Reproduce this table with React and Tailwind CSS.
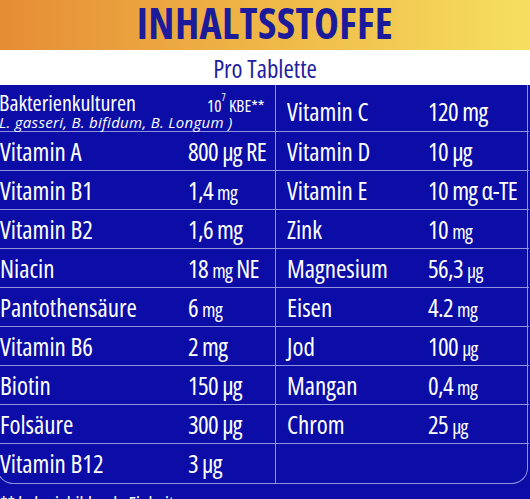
const left = [
  ['Vitamin A', '800', 'µg RE', false],
  ['Vitamin B1', '1,4', 'mg', true],
  ['Vitamin B2', '1,6', 'mg', false],
  ['Niacin', '18', 'mg', true, 'NE'],
  ['Pantothensäure', '6', 'mg', true],
  ['Vitamin B6', '2', 'mg', false],
  ['Biotin', '150', 'µg', false],
  ['Folsäure', '300', 'µg', false],
  ['Vitamin B12', '3', 'µg', false],
]

const right = [
  ['Vitamin D', '10', 'µg', false],
  ['Vitamin E', '10', 'mg α-TE', false],
  ['Zink', '10', 'mg', true],
  ['Magnesium', '56,3', 'µg', true],
  ['Eisen', '4.2', 'mg', true],
  ['Jod', '100', 'µg', true],
  ['Mangan', '0,4', 'mg', true],
  ['Chrom', '25', 'µg', true],
]

const font = "font-['Open_Sans',sans-serif] [font-stretch:75%]"

function Amount({ num, unit, small, suffix }) {
  return (
    <span className="whitespace-nowrap tracking-[-0.6px]">
      {num}{' '}
      <span className={small ? 'text-[20px]' : ''}>{unit}</span>
      {suffix && <> {suffix}</>}
    </span>
  )
}

function Cell({ row, side, last }) {
  const [name, num, unit, small, suffix] = row || []
  const isLeft = side === 'left'
  return (
    <div
      className={`flex items-center h-[39px] border-[#8e93dc] ${last ? '' : 'border-b'} ${
        isLeft ? 'border-r pl-[2px]' : 'pl-[11px]'
      }`}
    >
      {row && (
        <>
          <span className={isLeft ? 'w-[188px] shrink-0' : 'w-[141px] shrink-0'}>{name}</span>
          <Amount num={num} unit={unit} small={small} suffix={suffix} />
        </>
      )}
    </div>
  )
}

export default function App() {
  return (
    <div className={`w-[530px] h-[499px] overflow-hidden bg-[#0b0da6] text-white ${font}`}>
      <header className="h-[50px] bg-linear-to-r from-[#e58c35] via-[#efb747] to-[#f5df60] flex items-start justify-center">
        <h1 className="text-[42px] font-bold text-[#1b1b9b] leading-[46px] tracking-[0.4px]">
          INHALTSSTOFFE
        </h1>
      </header>
      <div className="h-[35px] bg-white flex items-center justify-center">
        <p className="text-[25px] text-[#1e1ea0] leading-none mt-[1px]">Pro Tablette</p>
      </div>

      <div className="ml-[-3px] w-[531px] border-r border-b border-l border-[#8e93dc] rounded-b-[16px] text-[25px] leading-none">
        <div className="grid grid-cols-[278px_253px]">
          <div className="flex items-start h-[47px] border-b border-r border-[#8e93dc] pl-[1px] pt-[5px]">
            <div className="w-[208px] shrink-0">
              <div className="text-[22px] leading-[24px]">Bakterienkulturen</div>
              <div className="text-[15px] leading-[16px] italic whitespace-nowrap tracking-[0.3px] [font-stretch:100%]">
                L. gasseri, B. bifidum, B. Longum )
              </div>
            </div>
            <div className="text-[17px] mt-[7px] whitespace-nowrap">
              10<sup className="text-[10px] align-[6px]">7</sup> KBE**
            </div>
          </div>
          <div className="flex items-center h-[47px] border-b border-[#8e93dc] pl-[11px] pt-[6px]">
            <span className="w-[141px] shrink-0">Vitamin C</span>
            <Amount num="120" unit="mg" />
          </div>
        </div>
        <div className="grid grid-cols-[278px_253px]">
          <div>
            {left.map((r, i) => (
              <Cell key={r[0]} row={r} side="left" last={i === left.length - 1} />
            ))}
          </div>
          <div>
            {right.map((r) => (
              <Cell key={r[0]} row={r} side="right" />
            ))}
            <Cell side="right" last />
          </div>
        </div>
      </div>

      <p className="text-[19px] mt-[11px] leading-none">** koloniebildende Einheiten</p>
    </div>
  )
}
